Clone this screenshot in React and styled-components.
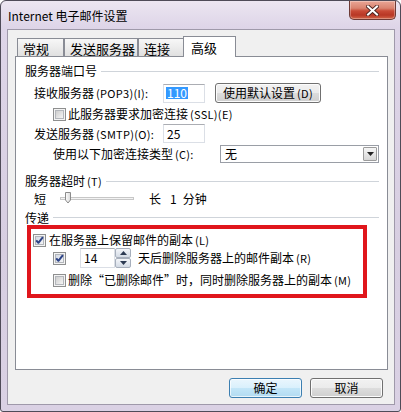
import React from "react";
import styled, { createGlobalStyle } from "styled-components";

const FONT = `"Noto Sans CJK SC", "Microsoft YaHei", "Noto Sans", sans-serif`;

const Global = createGlobalStyle`
  html, body { margin: 0; padding: 0; background: #ffffff; }
  body { font-family: ${FONT}; font-size: 12px; color: #000; }
  * { box-sizing: border-box; }
`;

const Window = styled.div`
  width: 401px;
  height: 412px;
  border: 1px solid #4f4b58;
  border-radius: 6px 6px 3px 3px;
  background: linear-gradient(180deg, #ece6f1 0px, #ded5e8 26px, #d7cee1 60%, #dad1e4 100%);
  display: flex;
  flex-direction: column;
  padding: 0 5px 6px 6px;
  overflow: hidden;
`;

const TitleBar = styled.div`
  height: 28px;
  display: flex;
  align-items: center;
  justify-content: space-between;
  padding-left: 1px;
`;

const TitleText = styled.span`
  font-size: 12px;
  line-height: 14px;
  color: #000;
  margin-top: 1px;
`;

const CloseButton = styled.div`
  align-self: flex-start;
  width: 47px;
  height: 19px;
  margin-right: -1px;
  border: 1px solid #6d3a35;
  border-top: none;
  border-radius: 0 0 5px 5px;
  background: linear-gradient(180deg, #eaa696 0%, #d9836f 40%, #c84a36 55%, #b83725 78%, #d26549 100%);
  box-shadow: inset 0 0 0 1px rgba(255, 255, 255, 0.3);
  display: flex;
  align-items: center;
  justify-content: center;
`;

const Client = styled.div`
  flex: 1;
  border: 1px solid #9f99aa;
  background: #f0f0f0;
  padding: 6px 6px 6px 7px;
  display: flex;
  flex-direction: column;
`;

const TabStrip = styled.div`
  display: flex;
  align-items: flex-end;
  height: 20px;
  padding-left: 2px;
  position: relative;
  z-index: 1;
`;

const Tab = styled.div`
  width: ${(p) => p.$w}px;
  height: ${(p) => (p.$sel ? 21 : 18)}px;
  margin-bottom: ${(p) => (p.$sel ? -1 : 0)}px;
  margin-left: ${(p) => (p.$sel ? -1 : 0)}px;
  border: 1px solid #898c95;
  border-bottom: none;
  background: ${(p) =>
    p.$sel ? "#ffffff" : "linear-gradient(180deg, #f7f7f7 0%, #ececec 50%, #e0e0e0 100%)"};
  font-size: 13px;
  line-height: 15px;
  padding-left: ${(p) => (p.$sel ? 7 : 5)}px;
  padding-top: ${(p) => (p.$sel ? 0 : 2)}px;
  display: flex;
  align-items: center;
  white-space: nowrap;
`;

const Panel = styled.div`
  height: 314px;
  border: 1px solid #898c95;
  background: #ffffff;
  padding: 0 8px 0 9px;
  display: flex;
  flex-direction: column;
`;

const GroupHeader = styled.div`
  display: flex;
  align-items: center;
  height: ${(p) => p.$h || 16}px;
  margin-top: ${(p) => p.$mt}px;
  white-space: nowrap;
  line-height: 14px;
`;

const Rule = styled.div`
  flex: 1;
  height: 1px;
  background: #cfd4da;
  margin-left: 4px;
`;

const Row = styled.div`
  display: flex;
  align-items: center;
  height: ${(p) => p.$h}px;
  margin-top: ${(p) => p.$mt || 0}px;
  padding-left: ${(p) => p.$indent || 0}px;
  white-space: nowrap;
  line-height: 14px;
`;

const Label = styled.span`
  width: ${(p) => p.$w}px;
  flex-shrink: 0;
`;

const Lat = styled.span`
  font-size: 11px;
  letter-spacing: 0.3px;
  margin-left: 2px;
`;

const Text = styled.span`
  margin-left: ${(p) => p.$ml || 0}px;
  margin-right: ${(p) => p.$mr || 0}px;
`;

const TextBox = styled.div`
  width: ${(p) => p.$w}px;
  height: 19px;
  border: 1px solid #dbdfe6;
  border-top-color: #abadb3;
  background: #fff;
  display: flex;
  align-items: center;
  padding-left: 2px;
  flex-shrink: 0;
`;

const Selected = styled.span`
  background: #3399ff;
  color: #fff;
  padding: 0 1px;
  line-height: 12px;
`;

const WinButton = styled.div`
  width: ${(p) => p.$w}px;
  height: ${(p) => p.$h || 20}px;
  margin-left: ${(p) => p.$ml || 0}px;
  border: 1px solid ${(p) => (p.$default ? "#3c7fb1" : "#707070")};
  border-radius: 3px;
  background: ${(p) =>
    p.$default
      ? "linear-gradient(180deg, #eaf6fd 0%, #d9f0fc 50%, #c3e6f8 50%, #b2dbf1 100%)"
      : "linear-gradient(180deg, #f2f2f2 0%, #ebebeb 50%, #dddddd 50%, #cfcfcf 100%)"};
  box-shadow: inset 0 0 0 1px ${(p) => (p.$default ? "rgba(255,255,255,0.7)" : "#fcfcfc")};
  display: flex;
  align-items: center;
  justify-content: center;
  flex-shrink: 0;
  white-space: nowrap;
  line-height: 14px;
`;

const ComboBox = styled.div`
  width: 160px;
  height: 18px;
  border: 1px solid #9a9ea6;
  background: #fff;
  display: flex;
  align-items: center;
  justify-content: space-between;
  padding: 0 1px 0 4px;
`;

const DropButton = styled.div`
  width: 14px;
  height: 14px;
  border: 1px solid #9c9c9c;
  border-radius: 1px;
  background: linear-gradient(180deg, #f6f6f6 0%, #e6e6e6 50%, #d6d6d6 100%);
  display: flex;
  align-items: center;
  justify-content: center;
`;

const SliderBox = styled.span`
  display: flex;
  margin-left: ${(p) => p.$ml}px;
  margin-right: ${(p) => p.$mr}px;
`;

const DeliveryBox = styled.div`
  margin-left: 2px;
  width: 340px;
  border: 4px solid #e0161c;
  padding: 4px 0 7px 2px;
  display: flex;
  flex-direction: column;
`;

const Spinner = styled.div`
  display: flex;
  height: 20px;
  margin-left: ${(p) => p.$ml}px;
`;

const SpinInput = styled.div`
  width: 35px;
  height: 20px;
  border: 1px solid #dbdfe6;
  border-top-color: #abadb3;
  background: #fff;
  display: flex;
  align-items: center;
  padding-left: 3px;
`;

const SpinButtons = styled.div`
  display: flex;
  flex-direction: column;
  width: 16px;
  height: 20px;
`;

const SpinBtn = styled.div`
  flex: 1;
  border: 1px solid #a7afbc;
  border-radius: 2px;
  background: linear-gradient(180deg, #f4f6f9 0%, #e3e8ef 50%, #d4dbe5 100%);
  display: flex;
  align-items: center;
  justify-content: center;
`;

const ButtonRow = styled.div`
  display: flex;
  justify-content: flex-end;
  gap: 8px;
  margin-top: 8px;
  padding-right: 5px;
`;

const BoxSvg = styled.svg`
  flex-shrink: 0;
  display: block;
`;

function CheckBox({ checked }) {
  const id = checked ? "cbg1" : "cbg0";
  return (
    <BoxSvg width="13" height="13" viewBox="0 0 13 13">
      <defs>
        <linearGradient id={id} x1="0" y1="0" x2="1" y2="1">
          <stop offset="0" stopColor={checked ? "#cfd6e3" : "#cbcbcb"} />
          <stop offset="1" stopColor="#f7f7f7" />
        </linearGradient>
      </defs>
      <rect x="0.5" y="0.5" width="12" height="12" fill="#f4f4f4" stroke="#8e8f8f" />
      <rect x="2.5" y="2.5" width="8" height="8" fill={`url(#${id})`} stroke="#b3b6bb" />
      {checked && (
        <polyline
          points="3.2,6.4 5.4,8.8 9.9,3.2"
          fill="none"
          stroke="#2d4487"
          strokeWidth="2"
          strokeLinejoin="round"
        />
      )}
    </BoxSvg>
  );
}

function Slider() {
  return (
    <svg width="75" height="15" viewBox="0 0 75 15">
      <defs>
        <linearGradient id="thumb" x1="0" y1="0" x2="1" y2="0">
          <stop offset="0" stopColor="#fdfdfd" />
          <stop offset="1" stopColor="#d9d9d9" />
        </linearGradient>
      </defs>
      <rect x="0.5" y="6.5" width="73" height="2" fill="#f3f3f3" stroke="#c7c7c7" />
      <path d="M5.5 1.5 h5 v7.5 l-2.5 3 l-2.5 -3 z" fill="url(#thumb)" stroke="#8b8b8b" />
    </svg>
  );
}

function Arrow({ up, size = 7, color = "#222" }) {
  const h = Math.ceil(size / 2);
  return (
    <svg width={size} height={h} viewBox={`0 0 ${size} ${h}`}>
      {up ? (
        <path d={`M0 ${h} L${size / 2} 0 L${size} ${h} Z`} fill={color} />
      ) : (
        <path d={`M0 0 L${size} 0 L${size / 2} ${h} Z`} fill={color} />
      )}
    </svg>
  );
}

export default function App() {
  return (
    <>
      <Global />
      <Window>
        <TitleBar>
          <TitleText>Internet 电子邮件设置</TitleText>
          <CloseButton>
            <svg width="13" height="11" viewBox="0 0 13 11">
              <path d="M2 1.5 L11 9.5 M11 1.5 L2 9.5" stroke="#4b2420" strokeWidth="3.8" strokeLinecap="square" />
              <path d="M2 1.5 L11 9.5 M11 1.5 L2 9.5" stroke="#ffffff" strokeWidth="2" strokeLinecap="square" />
            </svg>
          </CloseButton>
        </TitleBar>
        <Client>
          <TabStrip>
            <Tab $w={47}>常规</Tab>
            <Tab $w={74}>发送服务器</Tab>
            <Tab $w={46}>连接</Tab>
            <Tab $w={53} $sel>高级</Tab>
          </TabStrip>
          <Panel>
            <GroupHeader $mt={6}>
              服务器端口号
              <Rule />
            </GroupHeader>
            <Row $h={20} $mt={4} $indent={9}>
              <Label $w={129}>
                接收服务器<Lat>(POP3)(I):</Lat>
              </Label>
              <TextBox $w={42}>
                <Selected>110</Selected>
              </TextBox>
              <WinButton $w={106} $ml={10}>
                使用默认设置<Lat>(D)</Lat>
              </WinButton>
            </Row>
            <Row $h={14} $mt={4} $indent={28}>
              <CheckBox />
              <Text $ml={2}>
                此服务器要求加密连接<Lat>(SSL)(E)</Lat>
              </Text>
            </Row>
            <Row $h={19} $mt={3} $indent={9}>
              <Label $w={129}>
                发送服务器<Lat>(SMTP)(O):</Lat>
              </Label>
              <TextBox $w={42}>
                <Text $ml={1}>25</Text>
              </TextBox>
            </Row>
            <Row $h={18} $mt={2} $indent={28}>
              <Label $w={167}>
                使用以下加密连接类型<Lat>(C):</Lat>
              </Label>
              <ComboBox>
                <span>无</span>
                <DropButton>
                  <Arrow size={7} />
                </DropButton>
              </ComboBox>
            </Row>
            <GroupHeader $mt={10}>
              服务器超时<Lat>(T)</Lat>
              <Rule />
            </GroupHeader>
            <Row $h={15} $mt={2} $indent={9}>
              <Text>短</Text>
              <SliderBox $ml={14} $mr={14}>
                <Slider />
              </SliderBox>
              <Text $mr={9}>长</Text>
              <Text $mr={6}>1</Text>
              <Text>分钟</Text>
            </Row>
            <GroupHeader $mt={4} $h={15}>
              传递
              <Rule />
            </GroupHeader>
            <DeliveryBox>
              <Row $h={14}>
                <CheckBox checked />
                <Text $ml={3}>
                  在服务器上保留邮件的副本<Lat>(L)</Lat>
                </Text>
              </Row>
              <Row $h={20} $mt={1} $indent={20}>
                <CheckBox checked />
                <Spinner $ml={14}>
                  <SpinInput>14</SpinInput>
                  <SpinButtons>
                    <SpinBtn>
                      <Arrow up size={7} color="#2c3a52" />
                    </SpinBtn>
                    <SpinBtn>
                      <Arrow size={7} color="#2c3a52" />
                    </SpinBtn>
                  </SpinButtons>
                </Spinner>
                <Text $ml={7}>
                  天后删除服务器上的邮件副本<Lat>(R)</Lat>
                </Text>
              </Row>
              <Row $h={14} $mt={5} $indent={20}>
                <CheckBox />
                <Text $ml={2}>
                  删除“已删除邮件”时，同时删除服务器上的副本<Lat>(M)</Lat>
                </Text>
              </Row>
            </DeliveryBox>
          </Panel>
          <ButtonRow>
            <WinButton $w={73} $default>确定</WinButton>
            <WinButton $w={73}>取消</WinButton>
          </ButtonRow>
        </Client>
      </Window>
    </>
  );
}
